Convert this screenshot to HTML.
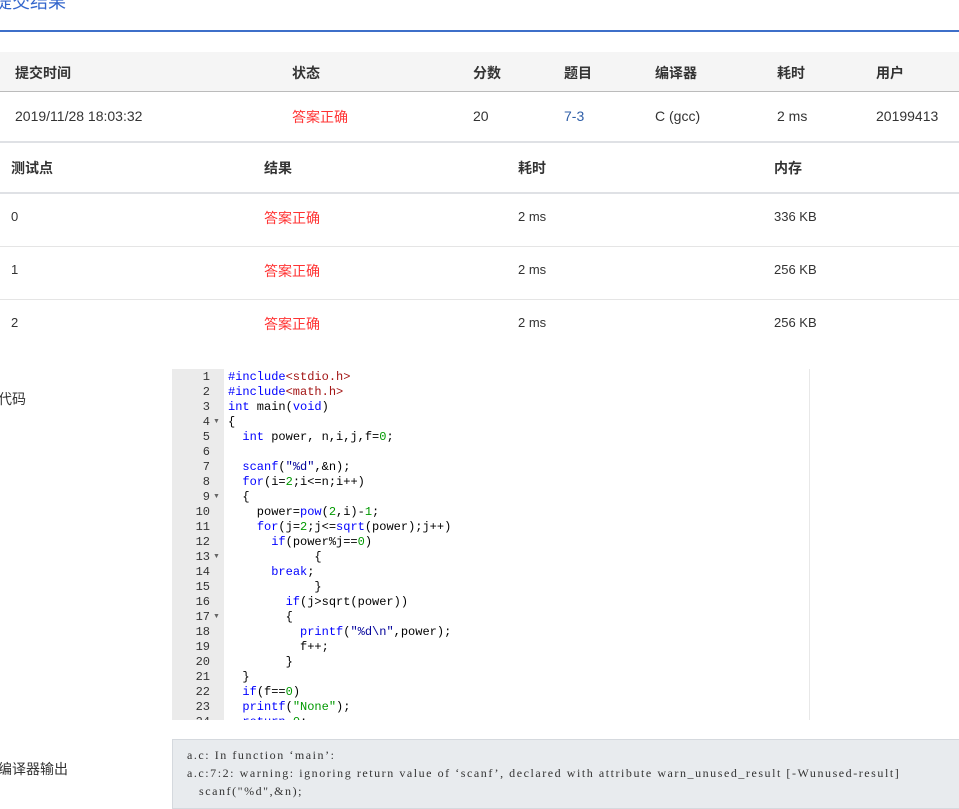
<!DOCTYPE html>
<html><head><meta charset="utf-8"><style>
*{margin:0;padding:0;box-sizing:border-box}
body{width:959px;height:802px;overflow:hidden;background:#fff;font-family:"Liberation Sans","Noto Sans CJK SC",sans-serif;color:#333;font-size:14px;position:relative}
.a{position:absolute;white-space:nowrap}
.b{font-weight:bold}
.r{color:#f33}
.code{position:absolute;left:172px;top:369px;width:638px;height:351px;overflow:hidden;border-right:1px solid #e8e8e8}
.gut{position:absolute;left:0;top:0;width:52px;height:351px;background:#ebebeb}
.ln{position:absolute;left:0;width:38px;text-align:right;font:12px "Liberation Mono",monospace;color:#333}
.cl{position:absolute;left:56px;font:12px "Liberation Mono",monospace;color:#000;white-space:pre}
.k{color:#00f}.s{color:#a31515}.n{color:#090}.st{color:#009}
.ar{position:absolute;left:41px;font-size:7px;color:#666}
.co{position:absolute;white-space:nowrap;font:12px 'Liberation Serif','Noto Serif CJK SC',serif;color:#333;letter-spacing:1.55px}
</style></head><body>
<div class="a" style="left:-6px;top:-12px;font-size:18px;color:#3366cc">提交结果</div>
<div class="a" style="left:0;top:30px;width:959px;height:2px;background:#3e6fc9"></div>

<div class="a" style="left:0;top:52px;width:959px;height:40px;background:#f5f5f5;border-bottom:1px solid #bbb"></div>
<div class="a b" style="left:15px;top:63px">提交时间</div>
<div class="a b" style="left:292px;top:63px">状态</div>
<div class="a b" style="left:473px;top:63px">分数</div>
<div class="a b" style="left:564px;top:63px">题目</div>
<div class="a b" style="left:655px;top:63px">编译器</div>
<div class="a b" style="left:777px;top:63px">耗时</div>
<div class="a b" style="left:876px;top:63px">用户</div>
<div class="a" style="left:15px;top:108px">2019/11/28 18:03:32</div>
<div class="a r" style="left:292px;top:107px">答案正确</div>
<div class="a" style="left:473px;top:108px">20</div>
<div class="a" style="left:564px;top:108px;color:#2f5fa8">7-3</div>
<div class="a" style="left:655px;top:108px">C (gcc)</div>
<div class="a" style="left:777px;top:108px">2 ms</div>
<div class="a" style="left:876px;top:108px">20199413</div>
<div class="a" style="left:0;top:141px;width:959px;height:2px;background:#dfe1e5"></div>

<div class="a b" style="left:11px;top:158px">测试点</div>
<div class="a b" style="left:264px;top:158px">结果</div>
<div class="a b" style="left:518px;top:158px">耗时</div>
<div class="a b" style="left:774px;top:158px">内存</div>
<div class="a" style="left:0;top:192px;width:959px;height:2px;background:#dfe1e5"></div>

<div class="a" style="left:11px;top:209px;font-size:13px">0</div>
<div class="a r" style="left:264px;top:208px">答案正确</div>
<div class="a" style="left:518px;top:209px;font-size:13px">2 ms</div>
<div class="a" style="left:774px;top:209px;font-size:13px">336 KB</div>
<div class="a" style="left:0;top:246px;width:959px;height:1px;background:#e5e5e5"></div>
<div class="a" style="left:11px;top:262px;font-size:13px">1</div>
<div class="a r" style="left:264px;top:261px">答案正确</div>
<div class="a" style="left:518px;top:262px;font-size:13px">2 ms</div>
<div class="a" style="left:774px;top:262px;font-size:13px">256 KB</div>
<div class="a" style="left:0;top:299px;width:959px;height:1px;background:#e5e5e5"></div>
<div class="a" style="left:11px;top:315px;font-size:13px">2</div>
<div class="a r" style="left:264px;top:314px">答案正确</div>
<div class="a" style="left:518px;top:315px;font-size:13px">2 ms</div>
<div class="a" style="left:774px;top:315px;font-size:13px">256 KB</div>

<div class="a" style="left:-2px;top:389px">代码</div>
<div class="code">
<div class="gut"></div>
<div class="ln" style="top:1px">1</div><div class="ln" style="top:16px">2</div><div class="ln" style="top:31px">3</div><div class="ln" style="top:46px">4</div><div class="ln" style="top:61px">5</div><div class="ln" style="top:76px">6</div><div class="ln" style="top:91px">7</div><div class="ln" style="top:106px">8</div><div class="ln" style="top:121px">9</div><div class="ln" style="top:136px">10</div><div class="ln" style="top:151px">11</div><div class="ln" style="top:166px">12</div><div class="ln" style="top:181px">13</div><div class="ln" style="top:196px">14</div><div class="ln" style="top:211px">15</div><div class="ln" style="top:226px">16</div><div class="ln" style="top:241px">17</div><div class="ln" style="top:256px">18</div><div class="ln" style="top:271px">19</div><div class="ln" style="top:286px">20</div><div class="ln" style="top:301px">21</div><div class="ln" style="top:316px">22</div><div class="ln" style="top:331px">23</div><div class="ln" style="top:346px">24</div>
<div class="ar" style="top:49px">▼</div><div class="ar" style="top:124px">▼</div><div class="ar" style="top:184px">▼</div><div class="ar" style="top:244px">▼</div>
<div class="cl" style="top:1px"><span class="k">#include</span><span class="s">&lt;stdio.h&gt;</span></div>
<div class="cl" style="top:16px"><span class="k">#include</span><span class="s">&lt;math.h&gt;</span></div>
<div class="cl" style="top:31px"><span class="k">int</span> main(<span class="k">void</span>)</div>
<div class="cl" style="top:46px">{</div>
<div class="cl" style="top:61px">  <span class="k">int</span> power, n,i,j,f=<span class="n">0</span>;</div>
<div class="cl" style="top:91px">  <span class="k">scanf</span>(<span class="st">"%d"</span>,&amp;n);</div>
<div class="cl" style="top:106px">  <span class="k">for</span>(i=<span class="n">2</span>;i&lt;=n;i++)</div>
<div class="cl" style="top:121px">  {</div>
<div class="cl" style="top:136px">    power=<span class="k">pow</span>(<span class="n">2</span>,i)-<span class="n">1</span>;</div>
<div class="cl" style="top:151px">    <span class="k">for</span>(j=<span class="n">2</span>;j&lt;=<span class="k">sqrt</span>(power);j++)</div>
<div class="cl" style="top:166px">      <span class="k">if</span>(power%j==<span class="n">0</span>)</div>
<div class="cl" style="top:181px">            {</div>
<div class="cl" style="top:196px">      <span class="k">break</span>;</div>
<div class="cl" style="top:211px">            }</div>
<div class="cl" style="top:226px">        <span class="k">if</span>(j&gt;sqrt(power))</div>
<div class="cl" style="top:241px">        {</div>
<div class="cl" style="top:256px">          <span class="k">printf</span>(<span class="st">"%d\n"</span>,power);</div>
<div class="cl" style="top:271px">          f++;</div>
<div class="cl" style="top:286px">        }</div>
<div class="cl" style="top:301px">  }</div>
<div class="cl" style="top:316px">  <span class="k">if</span>(f==<span class="n">0</span>)</div>
<div class="cl" style="top:331px">  <span class="k">printf</span>(<span class="n">"None"</span>);</div>
<div class="cl" style="top:346px">  <span class="k">return</span> <span class="n">0</span>;</div>
</div>

<div class="a" style="left:-2px;top:759px">编译器输出</div>
<div class="a" style="left:172px;top:739px;width:800px;height:70px;background:#e8ebee;border:1px solid #d5d9de"></div>
<div class="co" style="left:187px;top:748px">a.c: In function ‘main’:</div>
<div class="co" style="left:187px;top:766px">a.c:7:2: warning: ignoring return value of ‘scanf’, declared with attribute warn_unused_result [-Wunused-result]</div>
<div class="co" style="left:199px;top:784px">scanf("%d",&amp;n);</div>
</body></html>
